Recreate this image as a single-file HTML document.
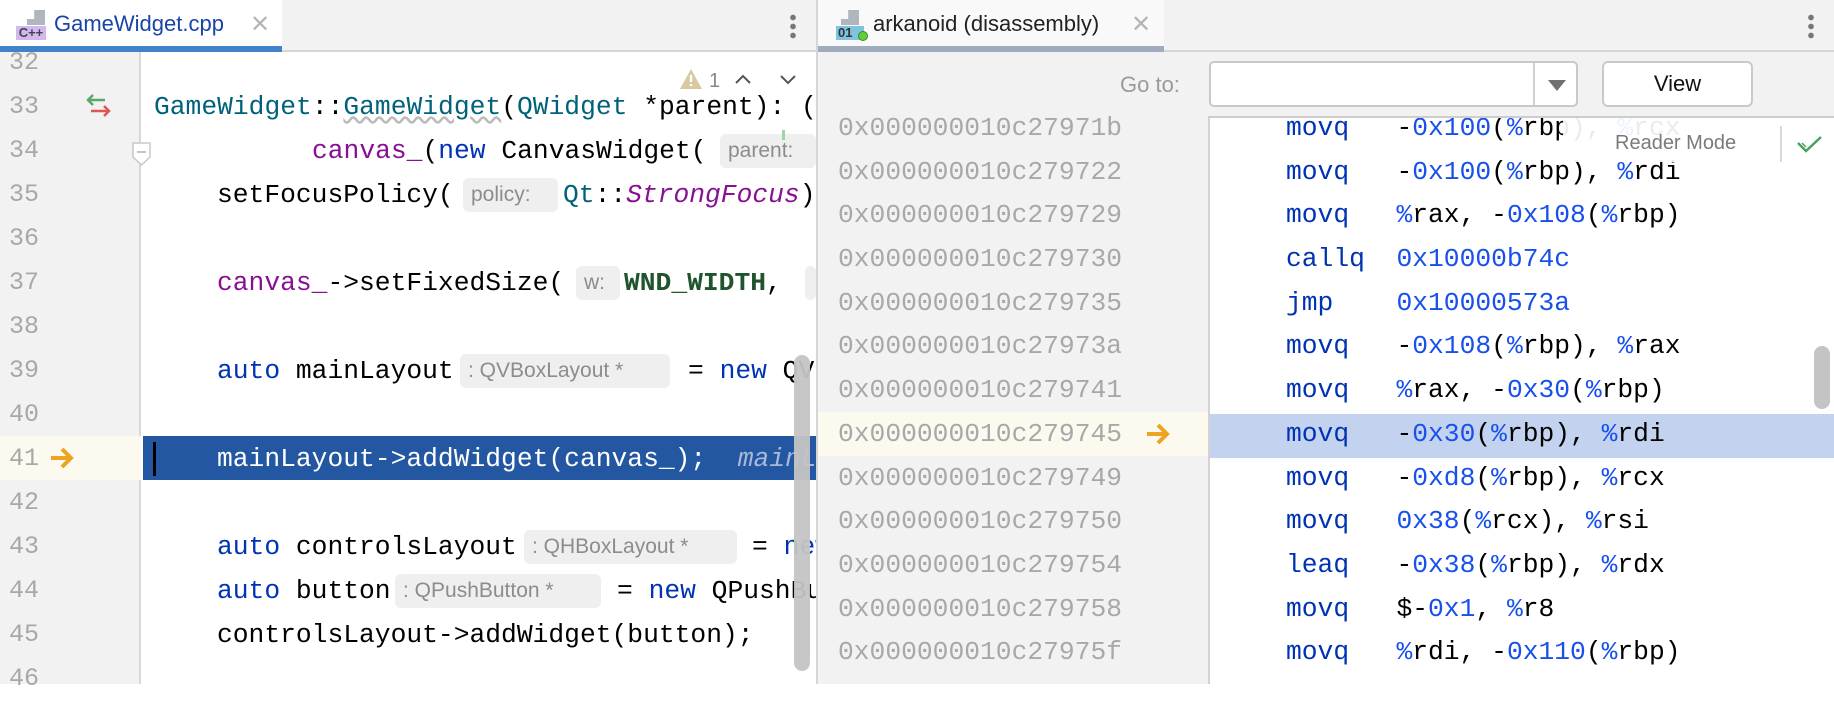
<!DOCTYPE html>
<html><head><meta charset="utf-8"><style>
*{margin:0;padding:0;box-sizing:border-box}
body{width:1834px;height:684px;overflow:hidden;background:#fff;position:relative;font-family:"Liberation Sans",sans-serif}
.a{position:absolute;white-space:pre}
.m{font-family:"Liberation Mono",monospace;font-size:26.3px;line-height:44px;height:44px}
.ln{position:absolute;left:9px;font-family:"Liberation Mono",monospace;font-size:25px;color:#a8a8a8;line-height:44px}
.h{position:absolute;height:34px;background:#efefef;border-radius:6px;color:#8c8c8c;font-size:21px;line-height:34px;padding-left:8px;white-space:pre}
.kw{color:#0033b3}.tl{color:#00627a}.pu{color:#871094}.mc{color:#1f542e;font-weight:bold}
.ad{position:absolute;left:838px;font-family:"Liberation Mono",monospace;font-size:26.3px;color:#a8a8a8;line-height:44px}
.ins{position:absolute;left:1286px;font-family:"Liberation Mono",monospace;font-size:26.3px;line-height:44px;color:#000;white-space:pre}
.n{color:#1750eb}
</style></head><body>
<div class="a" style="left:0;top:0;width:816px;height:52px;background:#f2f2f2;border-bottom:2px solid #d6d6d6"></div>
<div class="a" style="left:0;top:0;width:282px;height:52px;background:#fff"></div>
<div class="a" style="left:0;top:46px;width:282px;height:6px;background:#4083c9"></div>
<div class="a" style="left:27px;top:10px;width:18px;height:15px;background:#b0b6bd;clip-path:polygon(40% 0,100% 0,100% 100%,0 100%,0 60%,40% 60%)"></div>
<div class="a" style="left:16px;top:26px;width:30px;height:14px;background:#d2b8f0;font-size:13px;font-weight:bold;color:#444;line-height:14px;text-align:center">C++</div>
<div class="a" style="left:54px;top:11px;font-size:22px;color:#1a44a8">GameWidget.cpp</div>
<div class="a" style="left:250px;top:10px;font-size:24px;color:#b5b5b5">✕</div>
<div class="a" style="left:790px;top:13px;width:6px;height:26px;background:radial-gradient(circle,#777 2.6px,transparent 3px) 0 0/6px 9px"></div>
<div class="a" style="left:0;top:52px;width:141px;height:632px;background:#f2f2f2;border-right:2px solid #d8d8d8"></div>
<div class="a" style="left:0;top:436px;width:141px;height:44px;background:#fcfaef"></div>
<div class="ln" style="top:41px">32</div><div class="ln" style="top:85px">33</div><div class="ln" style="top:129px">34</div><div class="ln" style="top:173px">35</div><div class="ln" style="top:217px">36</div><div class="ln" style="top:261px">37</div><div class="ln" style="top:305px">38</div><div class="ln" style="top:349px">39</div><div class="ln" style="top:393px">40</div><div class="ln" style="top:437px">41</div><div class="ln" style="top:481px">42</div><div class="ln" style="top:525px">43</div><div class="ln" style="top:569px">44</div><div class="ln" style="top:613px">45</div><div class="ln" style="top:657px">46</div>
<svg class="a" style="left:80px;top:92px" width="36" height="26"><path d="M25 8H9M13 3L8 8l5 5" stroke="#59a869" stroke-width="2.5" fill="none"/><path d="M11 19h17M24 14l5 5-5 5" stroke="#e05555" stroke-width="2.5" fill="none"/></svg>
<svg class="a" style="left:132px;top:142px" width="20" height="24"><path d="M1 1h17v14l-8.5 8-8.5-8z" fill="#fff" stroke="#c8c8c8" stroke-width="1.5"/><path d="M5 10h9" stroke="#b0b0b0" stroke-width="1.5"/></svg>
<svg class="a" style="left:48px;top:445px" width="30" height="26"><path d="M3 13h20M14 4l9 9-9 9" stroke="#eea423" stroke-width="4" fill="none"/></svg>
<div class="a" style="left:143px;top:436px;width:673px;height:44px;background:#2457a1"></div>
<div class="a" style="left:153px;top:442px;width:3px;height:34px;background:#000"></div>
<svg class="a" style="left:678px;top:67px" width="130" height="24"><path d="M13 2L2 22h22z" fill="#d9c9a0"/><path d="M13 8v7M13 17v2" stroke="#fff" stroke-width="2.4"/><text x="31" y="20" font-family="Liberation Sans" font-size="20" fill="#888">1</text><path d="M58 16l7-7 7 7" stroke="#555" stroke-width="2" fill="none"/><path d="M103 9l7 7 7-7" stroke="#555" stroke-width="2" fill="none"/></svg>
<div class="a m" style="left:154px;top:85px"><span class="tl">GameWidget</span>::<span class="tl" style="text-decoration:underline wavy #bbb">GameWidget</span>(<span class="tl">QWidget</span> *parent): (</div>
<div class="a m" style="left:312px;top:129px"><span class="pu">canvas_</span>(<span class="kw">new</span> CanvasWidget(</div>
<div class="h" style="left:720px;top:134px;width:96px">parent:</div>
<div class="a" style="left:782px;top:130px;width:3px;height:10px;background:#9fd59f"></div>
<div class="a m" style="left:217px;top:173px">setFocusPolicy(</div>
<div class="h" style="left:463px;top:178px;width:95px">policy:</div>
<div class="a m" style="left:563px;top:173px"><span class="tl">Qt</span>::<i class="pu">StrongFocus</i>)</div>
<div class="a m" style="left:217px;top:261px"><span class="pu">canvas_</span>-&gt;setFixedSize(</div>
<div class="h" style="left:576px;top:266px;width:44px">w:</div>
<div class="a m" style="left:624px;top:261px"><span class="mc">WND_WIDTH</span>,</div>
<div class="h" style="left:805px;top:266px;width:11px"></div>
<div class="a m" style="left:217px;top:349px"><span class="kw">auto</span> mainLayout</div>
<div class="h" style="left:460px;top:354px;width:210px">: QVBoxLayout *</div>
<div class="a m" style="left:688px;top:349px">= <span class="kw">new</span> QV</div>
<div class="a m" style="left:217px;top:437px;color:#fff">mainLayout-&gt;addWidget(canvas_);  <i style="color:#a9b8d6">mainLayout</i></div>
<div class="a m" style="left:217px;top:525px"><span class="kw">auto</span> controlsLayout</div>
<div class="h" style="left:524px;top:530px;width:213px">: QHBoxLayout *</div>
<div class="a m" style="left:752px;top:525px">= <span class="kw">new</span></div>
<div class="a m" style="left:217px;top:569px"><span class="kw">auto</span> button</div>
<div class="h" style="left:395px;top:574px;width:206px">: QPushButton *</div>
<div class="a m" style="left:617px;top:569px">= <span class="kw">new</span> QPushButton</div>
<div class="a m" style="left:217px;top:613px">controlsLayout-&gt;addWidget(button);</div>
<div class="a" style="left:794px;top:355px;width:16px;height:316px;background:#c4c4c4;border-radius:8px;opacity:.95"></div>
<div class="a" style="left:816px;top:0;width:1018px;height:684px;background:#f2f2f2;border-left:2px solid #d6d6d6"></div>
<div class="a" style="left:818px;top:0;width:1016px;height:52px;border-bottom:2px solid #d6d6d6"></div>
<div class="a" style="left:818px;top:0;width:346px;height:50px;background:#f9f9f9"></div>
<div class="a" style="left:818px;top:46px;width:346px;height:6px;background:#a0acbd"></div>
<div class="a" style="left:841px;top:10px;width:18px;height:15px;background:#b0b6bd;clip-path:polygon(40% 0,100% 0,100% 100%,0 100%,0 60%,40% 60%)"></div>
<div class="a" style="left:836px;top:26px;width:28px;height:14px;background:#7ec3e0;font-size:13px;font-weight:bold;color:#333;line-height:14px;padding-left:2px">01</div>
<div class="a" style="left:858px;top:31px;width:10px;height:10px;border-radius:50%;background:#5fce3a;border:1px solid #3a8a25"></div>
<div class="a" style="left:873px;top:11px;font-size:22px;color:#222">arkanoid (disassembly)</div>
<div class="a" style="left:1131px;top:10px;font-size:24px;color:#b5b5b5">✕</div>
<div class="a" style="left:1808px;top:13px;width:6px;height:26px;background:radial-gradient(circle,#777 2.6px,transparent 3px) 0 0/6px 9px"></div>
<div class="a" style="left:1120px;top:72px;font-size:22px;color:#9a9a9a">Go to:</div>
<div class="a" style="left:1209px;top:61px;width:369px;height:46px;background:#fff;border:2px solid #c9c9c9;border-radius:5px"></div>
<div class="a" style="left:1533px;top:63px;width:2px;height:42px;background:#d0d0d0"></div>
<div class="a" style="left:1548px;top:80px;width:0;height:0;border-left:9px solid transparent;border-right:9px solid transparent;border-top:11px solid #707070"></div>
<div class="a" style="left:1602px;top:61px;width:151px;height:46px;background:#fff;border:2px solid #c9c9c9;border-radius:6px;font-size:22px;line-height:42px;text-align:center;color:#111">View</div>
<div class="a" style="left:818px;top:412px;width:391px;height:44px;background:#fcfaef"></div>
<div class="ad" style="top:106px">0x000000010c27971b</div>
<div class="ad" style="top:150px">0x000000010c279722</div>
<div class="ad" style="top:193px">0x000000010c279729</div>
<div class="ad" style="top:237px">0x000000010c279730</div>
<div class="ad" style="top:281px">0x000000010c279735</div>
<div class="ad" style="top:324px">0x000000010c27973a</div>
<div class="ad" style="top:368px">0x000000010c279741</div>
<div class="ad" style="top:412px">0x000000010c279745</div>
<div class="ad" style="top:456px">0x000000010c279749</div>
<div class="ad" style="top:499px">0x000000010c279750</div>
<div class="ad" style="top:543px">0x000000010c279754</div>
<div class="ad" style="top:587px">0x000000010c279758</div>
<div class="ad" style="top:630px">0x000000010c27975f</div>
<svg class="a" style="left:1144px;top:421px" width="30" height="26"><path d="M3 13h20M14 4l9 9-9 9" stroke="#eea423" stroke-width="4" fill="none"/></svg>
<div class="a" style="left:1208px;top:116px;width:626px;height:568px;background:#fff;border-top:2px solid #cdcdcd;border-left:2px solid #d4d4d4;overflow:hidden">
<div class="a" style="left:0;top:296px;width:626px;height:44px;background:#c3d3ef"></div>
</div>
<div style="position:absolute;left:0;top:0;width:1834px;height:684px;clip-path:inset(118px 0 0 1210px)">
<div class="ins" style="top:106px"><span class="kw">movq</span>   -<span class="n">0x100</span>(<span class="n">%</span>rbp), <span class="n">%</span>rcx</div>
<div class="ins" style="top:150px"><span class="kw">movq</span>   -<span class="n">0x100</span>(<span class="n">%</span>rbp), <span class="n">%</span>rdi</div>
<div class="ins" style="top:193px"><span class="kw">movq</span>   <span class="n">%</span>rax, -<span class="n">0x108</span>(<span class="n">%</span>rbp)</div>
<div class="ins" style="top:237px"><span class="kw">callq</span>  <span class="n">0x10000b74c</span></div>
<div class="ins" style="top:281px"><span class="kw">jmp</span>    <span class="n">0x10000573a</span></div>
<div class="ins" style="top:324px"><span class="kw">movq</span>   -<span class="n">0x108</span>(<span class="n">%</span>rbp), <span class="n">%</span>rax</div>
<div class="ins" style="top:368px"><span class="kw">movq</span>   <span class="n">%</span>rax, -<span class="n">0x30</span>(<span class="n">%</span>rbp)</div>
<div class="ins" style="top:412px"><span class="kw">movq</span>   -<span class="n">0x30</span>(<span class="n">%</span>rbp), <span class="n">%</span>rdi</div>
<div class="ins" style="top:456px"><span class="kw">movq</span>   -<span class="n">0xd8</span>(<span class="n">%</span>rbp), <span class="n">%</span>rcx</div>
<div class="ins" style="top:499px"><span class="kw">movq</span>   <span class="n">0x38</span>(<span class="n">%</span>rcx), <span class="n">%</span>rsi</div>
<div class="ins" style="top:543px"><span class="kw">leaq</span>   -<span class="n">0x38</span>(<span class="n">%</span>rbp), <span class="n">%</span>rdx</div>
<div class="ins" style="top:587px"><span class="kw">movq</span>   $-<span class="n">0x1</span>, <span class="n">%</span>r8</div>
<div class="ins" style="top:630px"><span class="kw">movq</span>   <span class="n">%</span>rdi, -<span class="n">0x110</span>(<span class="n">%</span>rbp)</div>
</div>
<div class="a" style="left:1563px;top:118px;width:271px;height:44px;background:rgba(255,255,255,0.92)"></div>
<div class="a" style="left:1615px;top:132px;font-size:20px;color:#7a7a7a">Reader Mode</div>
<div class="a" style="left:1780px;top:126px;width:2px;height:36px;background:#d8d8d8"></div>
<svg class="a" style="left:1796px;top:134px" width="28" height="22"><path d="M2 9l8 8L25 3" stroke="#4aa35d" stroke-width="2.5" fill="none"/><path d="M6 9l4 4" stroke="#4aa35d" stroke-width="1.5" fill="none"/></svg>
<div class="a" style="left:1814px;top:346px;width:16px;height:63px;background:#c4c4c4;border-radius:8px"></div>
</body></html>
